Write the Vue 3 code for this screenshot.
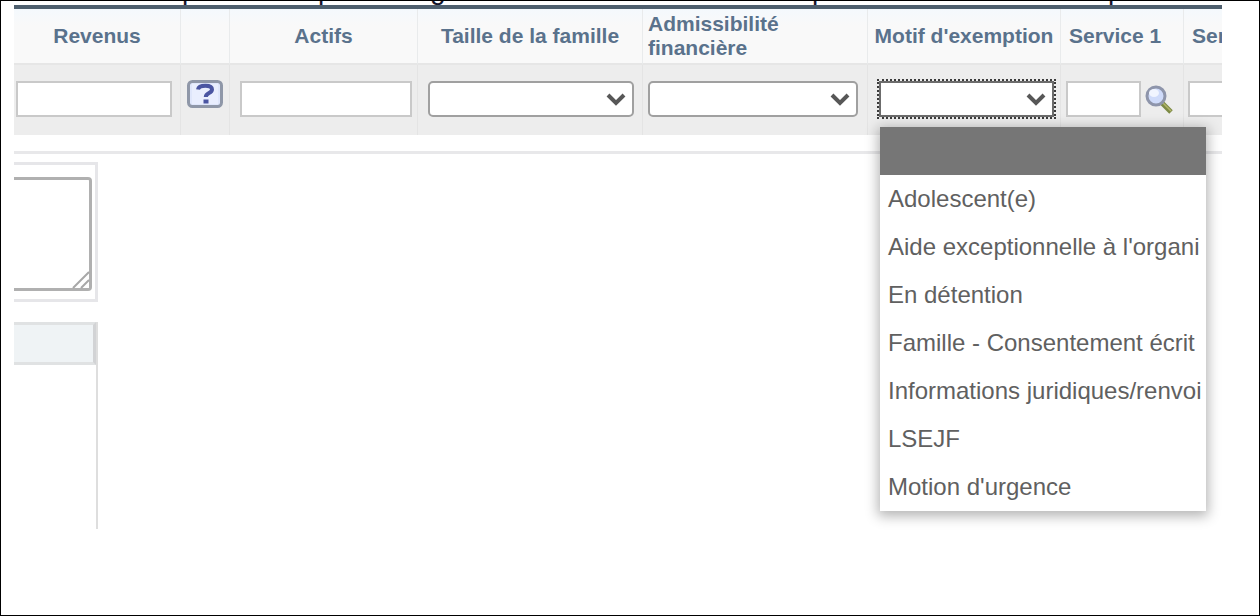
<script setup>
import { ref } from 'vue'

const reasons = [
  '',
  'Adolescent(e)',
  "Aide exceptionnelle à l'organi",
  'En détention',
  'Famille - Consentement écrit',
  'Informations juridiques/renvoi',
  'LSEJF',
  "Motion d'urgence",
]
const selected = ref('')
</script>

<template>
  <main class="frame">
    <div class="descenders" aria-hidden="true">
      <span>p</span><span>p</span><span>g</span><span>p</span><span>p</span>
    </div>

    <table class="grid">
      <colgroup>
        <col class="c-income" /><col class="c-help" /><col class="c-assets" /><col class="c-size" />
        <col class="c-fin" /><col class="c-reason" /><col class="c-service" /><col class="c-next" />
      </colgroup>
      <thead>
        <tr>
          <th id="h-income">Revenus</th>
          <th></th>
          <th id="h-assets">Actifs</th>
          <th id="h-size">Taille de la famille</th>
          <th id="h-fin" class="start">Admissibilité financière</th>
          <th id="h-reason" class="tight">Motif d'exemption</th>
          <th id="h-service" class="start tight service-head">Service 1</th>
          <th id="h-next" class="start tight service-head">Ser</th>
        </tr>
      </thead>
      <tbody>
        <tr>
          <td class="income"><input type="text" aria-labelledby="h-income" /></td>
          <td class="help">
            <button type="button" class="icon" aria-label="Aide">
              <svg width="36" height="28" viewBox="0 0 36 28">
                <rect x="1.5" y="1.5" width="33" height="25" rx="4" fill="#dfe6fb" stroke="#8f97a8" stroke-width="3" />
                <rect x="5" y="4" width="26" height="20" fill="#e9eefe" />
                <path d="M11 9.5C11.500 6.500 14.500 5.700 18.500 5.700C22.500 5.700 25 7 25 9.500C25 13.500 18.800 12.500 18.800 17" fill="none" stroke="#4a55a2" stroke-width="4" />
                <rect x="16.500" y="19.500" width="5" height="4" fill="#4a55a2" />
              </svg>
            </button>
          </td>
          <td class="assets"><input type="text" aria-labelledby="h-assets" /></td>
          <td class="size">
            <div class="picker">
              <select aria-labelledby="h-size"><option></option></select>
              <svg class="chevron" width="20" height="14" viewBox="0 0 20 14"><path d="M2 3L10 11L18 3" /></svg>
            </div>
          </td>
          <td class="fin">
            <div class="picker">
              <select aria-labelledby="h-fin"><option></option></select>
              <svg class="chevron" width="20" height="14" viewBox="0 0 20 14"><path d="M2 3L10 11L18 3" /></svg>
            </div>
          </td>
          <td class="reason">
            <div class="picker active">
              <select v-model="selected" aria-labelledby="h-reason">
                <option v-for="r in reasons" :key="r" :value="r">{{ r }}</option>
              </select>
              <svg class="chevron" width="20" height="14" viewBox="0 0 20 14"><path d="M2 3L10 11L18 3" /></svg>
              <ul class="menu" role="listbox" aria-labelledby="h-reason">
                <li
                  v-for="r in reasons"
                  :key="r"
                  role="option"
                  :aria-selected="r === selected"
                  :class="{ chosen: r === selected }"
                  @click="selected = r"
                >{{ r }}</li>
              </ul>
            </div>
          </td>
          <td class="service">
            <div class="lookup">
              <input type="text" aria-labelledby="h-service" />
              <button type="button" class="icon" aria-label="Rechercher">
                <svg width="28" height="30" viewBox="0 0 28 30">
                  <path d="M16 18L26 28" stroke="#7c8a45" stroke-width="5" />
                  <path d="M17 18L26 27" stroke="#b3b56a" stroke-width="1.500" />
                  <circle cx="11" cy="12" r="9" fill="#cfdbfa" stroke="#8e95ab" stroke-width="3" />
                  <ellipse cx="9" cy="9" rx="5" ry="4" fill="#f1f5ff" />
                </svg>
              </button>
            </div>
          </td>
          <td class="next"><input type="text" aria-labelledby="h-next" /></td>
        </tr>
      </tbody>
    </table>

    <section class="below">
      <div class="note">
        <div class="note-field">
          <textarea aria-label="Notes"></textarea>
          <svg class="grip" width="18" height="18" viewBox="0 0 18 18">
            <path d="M1 17L17 1M9 17L17 9" fill="none" stroke="#a8a8a8" stroke-width="2" />
          </svg>
        </div>
      </div>
      <div class="panel"><div class="panel-head"></div></div>
    </section>
  </main>
</template>

<style>
body {
  background: #fff;
}
</style>

<style scoped>
.frame {
  box-sizing: border-box;
  min-height: 100vh;
  border: 1px solid #000;
  padding: 0 37px 0 13px;
  background: #fff;
  font-family: "Liberation Sans", Arial, sans-serif;
}
.descenders {
  display: grid;
  grid-template-columns: 136px 112px 382px 296px 30px;
  align-content: end;
  height: 4px;
  padding-left: 168px;
  overflow: hidden;
  font-size: 28px;
  line-height: 30px;
  color: #15152b;
}
.grid {
  width: 100%;
  table-layout: fixed;
  border-collapse: separate;
  border-spacing: 0;
  border-top: 4px solid #4e5f6e;
}
.c-income { width: 167px; }
.c-help { width: 49px; }
.c-assets { width: 188px; }
.c-size { width: 225px; }
.c-fin { width: 225px; }
.c-reason { width: 193px; }
.c-service { width: 123px; }
.c-next { width: 38px; }
th {
  box-sizing: border-box;
  height: 56px;
  padding: 0 5px;
  border-right: 1px solid #e9ebec;
  border-bottom: 2px solid #e6e6e6;
  background: linear-gradient(#f4f9fd, #f9f9f9 30%);
  color: #5a728c;
  font-size: 21px;
  line-height: 24px;
  vertical-align: middle;
}
.start { text-align: left; }
.tight {
  overflow: hidden;
  white-space: nowrap;
}
.service-head { padding: 0 0 0 8px; }
td {
  box-sizing: border-box;
  height: 70px;
  border-right: 1px solid #e4e4e4;
  background: #ededed;
  vertical-align: middle;
}
th:last-child,
td:last-child { border-right: 0; }
.income { padding: 0 8px 2px 2px; }
.help { padding: 0 0 8px; text-align: center; }
.assets { padding: 0 5px 2px 10px; }
.size { padding: 0 8px 2px 10px; }
.fin { padding: 0 9px 2px 5px; }
.reason { padding: 0 6px 2px 11px; }
.service { padding: 0 10px 2px 5px; }
.next { padding: 0 0 2px 4px; }
input,
select {
  box-sizing: border-box;
  display: block;
  width: 100%;
  height: 36px;
  margin: 0;
  padding: 0 8px;
  border: 2px solid #c9c9c9;
  border-radius: 0;
  background: #fff;
  color: #555;
  font: 21px "Liberation Sans", Arial, sans-serif;
}
.next input { border-right: 0; }
select {
  appearance: none;
  border-color: #a0a0a0;
  border-radius: 5px;
  outline: 0;
}
.picker { position: relative; }
.active select {
  border-color: #6c6c6c;
  border-radius: 0;
  outline: 2px dotted #3c3c3c;
}
.chevron {
  position: absolute;
  top: 0;
  bottom: 0;
  right: 8px;
  margin: auto 0;
  pointer-events: none;
}
.chevron path {
  fill: none;
  stroke: #575757;
  stroke-width: 4;
}
.icon {
  display: inline-block;
  padding: 0;
  border: 0;
  background: none;
  line-height: 0;
}
.lookup {
  display: flex;
  align-items: center;
  gap: 4px;
}
.lookup input {
  flex: 1;
  min-width: 0;
}
.menu {
  position: absolute;
  top: 46px;
  left: 1px;
  z-index: 1;
  width: 326px;
  margin: 0;
  padding: 0;
  list-style: none;
  background: #fff;
  box-shadow: 0 3px 12px 2px rgba(0, 0, 0, 0.3);
}
.menu li {
  height: 48px;
  padding-left: 8px;
  color: #606060;
  font-size: 24px;
  line-height: 48px;
  white-space: nowrap;
}
.menu .chosen { background: #767676; }
.below {
  margin-top: 16px;
  border-top: 3px solid #e8e8ea;
  padding-top: 8px;
}
.note {
  box-sizing: border-box;
  width: 84px;
  border: 3px solid #e6e6e9;
  border-left: 0;
  padding: 12px 3px 8px 0;
}
.note-field { position: relative; }
textarea {
  box-sizing: border-box;
  display: block;
  width: 100%;
  height: 114px;
  margin: 0;
  border: 3px solid #b0b0b0;
  border-left: 0;
  border-radius: 0 4px 4px 0;
  background: #fff;
  resize: none;
}
.grip {
  position: absolute;
  right: 2px;
  bottom: 2px;
  pointer-events: none;
}
.panel {
  box-sizing: border-box;
  width: 84px;
  height: 207px;
  margin-top: 20px;
  border-right: 2px solid #dedede;
}
.panel-head {
  box-sizing: border-box;
  height: 43px;
  border: 3px solid #e0e2e3;
  border-right-color: #d2d3d5;
  border-left: 0;
  background: #eff3f5;
}
</style>
